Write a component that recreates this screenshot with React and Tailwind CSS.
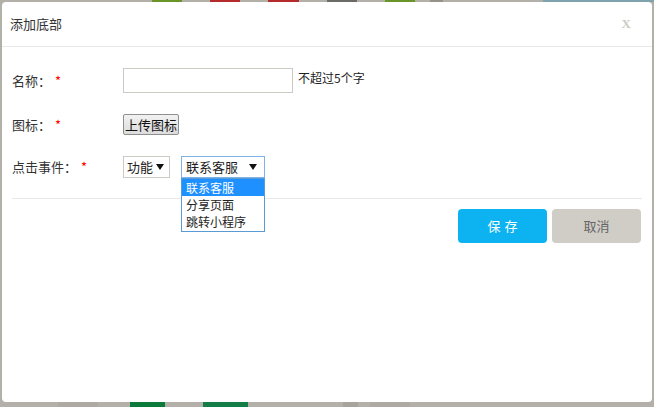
const font = { fontFamily: '"Microsoft YaHei", "Noto Sans CJK SC", "Noto Sans", sans-serif' };

function Label({ text }) {
  return (
    <div className="w-[121px] shrink-0 pl-[10px] text-[13px] text-[#333]">
      {text}
      <span className="ml-[4px] text-[#f00]">*</span>
    </div>
  );
}

function Arrow() {
  return <span className="inline-block w-0 h-0 border-l-[4px] border-r-[4px] border-t-[6px] border-l-transparent border-r-transparent border-t-[#111]" />;
}

export default function App() {
  return (
    <div className="w-[654px] h-[407px] bg-[#b3b0a9] flex flex-col overflow-hidden" style={font}>
      {/* page behind the mask */}
      <div className="h-[2px] flex shrink-0">
        <div className="w-[152px]" />
        <div className="w-[30px] bg-[#6a9528]" />
        <div className="w-[28px]" />
        <div className="w-[30px] bg-[#b52a2a]" />
        <div className="w-[28px]" />
        <div className="w-[31px] bg-[#b52a2a]" />
        <div className="w-[28px]" />
        <div className="w-[30px] bg-[#6a6a66]" />
        <div className="w-[28px]" />
        <div className="w-[30px] bg-[#6a9528]" />
        <div className="w-[15px]" />
        <div className="w-[13px] bg-[#95928c]" />
        <div className="w-[100px]" />
        <div className="flex-1 bg-[#7fa3ad]" />
      </div>

      <div className="ml-[2px] w-[650px] h-[400px] shrink-0 bg-white rounded-[4px] flex flex-col">
        <div className="h-[45px] px-[8px] flex items-center justify-between border-b border-[#e8e8e8]">
          <span className="text-[13px] text-[#333]">添加底部</span>
          <span className="mr-[13px] text-[13px] font-bold text-[#cfcac2]" style={{ fontFamily: '"Liberation Serif", serif' }}>X</span>
        </div>

        <div className="flex flex-col pt-[21px]">
          <div className="flex items-center h-[25px]">
            <Label text="名称：" />
            <div className="w-[170px] h-[25px] border border-[#cdcac4] bg-white" />
            <span className="ml-[5px] text-[12px] text-[#222] -mt-[5px]">不超过5个字</span>
          </div>

          <div className="flex items-center h-[21px] mt-[21px]">
            <Label text="图标：" />
            <div className="h-[21px] px-[1px] flex items-center border border-[#8f8f8f] rounded-[2px] bg-gradient-to-b from-[#f2f2f2] to-[#dcdcdc] text-[13px] text-[#111] leading-none">
              上传图标
            </div>
          </div>

          <div className="flex items-start h-[22px] mt-[21px]">
            <div className="pt-[1px]"><Label text="点击事件：" /></div>
            <div className="w-[47px] h-[22px] flex items-center justify-between pl-[3px] pr-[5px] border border-[#cdcac4] text-[13px] text-[#222]">
              <span>功能</span>
              <Arrow />
            </div>
            <div className="relative ml-[11px]">
              <div className="w-[84px] h-[22px] flex items-center justify-between pl-[4px] pr-[7px] border border-[#7fb2e5] text-[13px] text-[#222]">
                <span>联系客服</span>
                <Arrow />
              </div>
              <div className="absolute left-0 top-[22px] w-[84px] border border-[#5b9bd5] bg-white text-[12px] text-[#222] leading-[17px] z-10">
                <div className="h-[17px] bg-[#1e90ff] text-white pl-[4px]">联系客服</div>
                <div className="h-[17px] pl-[4px]">分享页面</div>
                <div className="h-[17px] pl-[4px] mb-[1px]">跳转小程序</div>
              </div>
            </div>
          </div>

          <div className="mx-[10px] mt-[20px] border-t border-[#e8e8e8]" />

          <div className="flex justify-end gap-[5px] mr-[11px] mt-[10px]">
            <div className="w-[89px] h-[34px] rounded-[4px] bg-[#0db3f0] flex items-center justify-center text-[13px] text-white tracking-[4px] pl-[4px]">
              保存
            </div>
            <div className="w-[89px] h-[34px] rounded-[4px] bg-[#d0cdc7] flex items-center justify-center text-[13px] text-[#666]">
              取消
            </div>
          </div>
        </div>
      </div>

      <div className="flex-1 flex">
        <div className="w-[58px]" />
        <div className="w-[40px] bg-[#aeaaa3]" />
        <div className="w-[32px]" />
        <div className="w-[35px] bg-[#0b7a3a]" />
        <div className="w-[38px]" />
        <div className="w-[45px] bg-[#137d48]" />
        <div className="w-[95px]" />
        <div className="w-[15px] bg-[#a7a39d]" />
        <div className="w-[12px]" />
        <div className="w-[40px] bg-[#aeaaa3]" />
      </div>
    </div>
  );
}
